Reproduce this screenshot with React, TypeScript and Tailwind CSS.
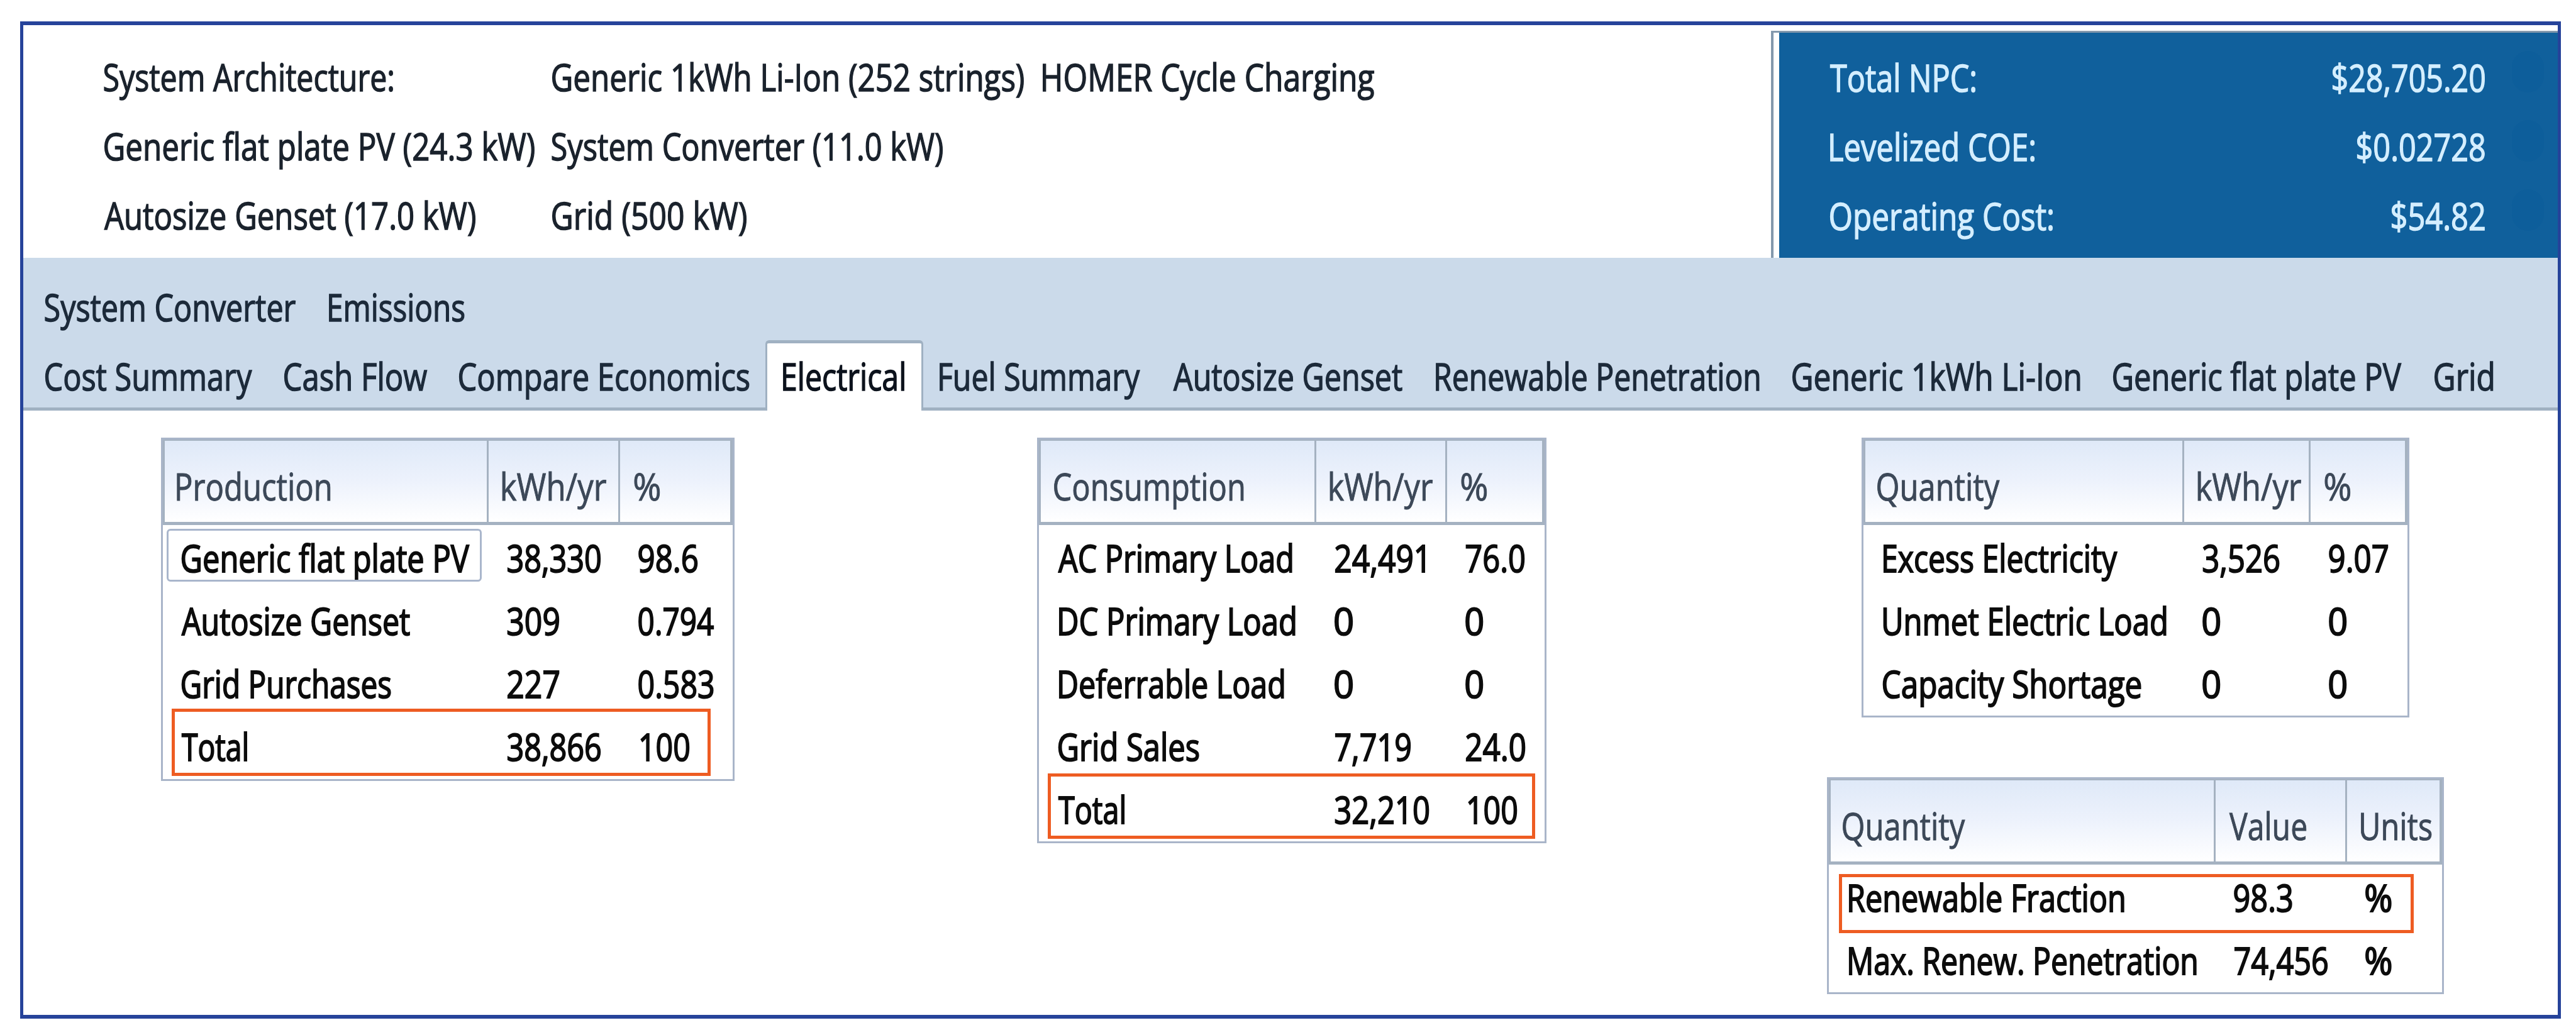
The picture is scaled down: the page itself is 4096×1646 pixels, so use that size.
import React, { useLayoutEffect, useRef, useState } from 'react';

const FONT = "60px 'Open Sans', 'Noto Sans', sans-serif";

// Squeezes a line of text so that its glyphs span exactly the width of its box.
const Fit: React.FC<{ children: string; className: string }> = ({ children, className }) => {
  const ref = useRef<HTMLDivElement>(null);
  const [transform, setTransform] = useState('none');

  useLayoutEffect(() => {
    const ctx = document.createElement('canvas').getContext('2d');
    if (!ref.current || !ctx) return;
    ctx.font = FONT;
    const m = ctx.measureText(children);
    const scale = ref.current.clientWidth / (m.actualBoundingBoxLeft + m.actualBoundingBoxRight);
    setTransform(`translateX(${m.actualBoundingBoxLeft * scale}px) scaleX(${scale})`);
  }, [children]);

  return (
    <div ref={ref} className={`shrink-0 h-[100px] leading-[100px] whitespace-pre ${className}`}>
      <span className="inline-block origin-left" style={{ transform }}>{children}</span>
    </div>
  );
};

type Cell = [text: string, className: string];

interface DataTableProps {
  className: string;
  columns: string;
  header: Cell[];
  rows: Cell[][];
  focused?: number;
  highlighted?: number;
  highlightClass?: string;
}

const DataTable: React.FC<DataTableProps> = ({ className, columns, header, rows, focused, highlighted, highlightClass }) => (
  <div className={`border-[3px] border-[#a9b5c9] ${className}`}>
    <div className={`grid ${columns} h-[136px] border-t-2 border-b-[5px] border-[#a5b2c1] shadow-[inset_3px_0_#a5b2c1,inset_-4px_0_#a5b2c1] bg-linear-to-b from-[#dfe9f8] via-[#edf2fc] to-white text-[#3c4858] [-webkit-text-stroke:1px]`}>
      {header.map(([text, width], i) => (
        <div key={text} className={i === 0 ? 'pl-[22px] pt-[22px]' : 'pl-[22px] pt-[22px] border-l-[3px] border-[#a5b2c1]'}>
          <Fit className={width}>{text}</Fit>
        </div>
      ))}
    </div>
    <div className="pt-[2px] text-[#0c0c0c] [-webkit-text-stroke:2px]">
      {rows.map((row, r) => (
        <div key={r} className={`relative grid ${columns}`}>
          {row.map(([text, width], i) => (
            <div key={i} className={i === 0 ? 'pl-[30px]' : 'pl-[33px]'}>
              <Fit className={width}>{text}</Fit>
            </div>
          ))}
          {focused === r && (
            <div className="absolute left-[6px] top-[4px] w-[501px] h-[84px] border-[3px] border-[#a9b6cc] rounded-md" />
          )}
          {highlighted === r && <div className={`absolute border-[5px] border-[#ee5c22] ${highlightClass}`} />}
        </div>
      ))}
    </div>
  </div>
);

const Tabs: React.FC = () => (
  <div className="h-[240px] bg-[#cbdaea] text-[#1c2a3a]">
    <div className="flex pl-[35px] pt-[28px]">
      <Fit className="w-[398px]">System Converter</Fit>
      <Fit className="w-[215px] ml-[53px]">Emissions</Fit>
    </div>
    <div className="flex h-[112px] mt-[3px] border-b-[5px] border-[#a0b1c2]">
      <div className="flex pt-[7px] pl-[35px] w-[1180px] shrink-0">
        <Fit className="w-[329px]">Cost Summary</Fit>
        <Fit className="w-[227px] ml-[51px]">Cash Flow</Fit>
        <Fit className="w-[461px] ml-[51px]">Compare Economics</Fit>
      </div>
      <div className="w-[251px] h-[112px] shrink-0 bg-white border-t-[5px] border-x-[3px] border-[#a0b1c2] rounded-t-md pl-[25px] pt-[2px] text-[#0c121c]">
        <Fit className="w-[193px]">Electrical</Fit>
      </div>
      <div className="flex pt-[7px] pl-[26px]">
        <Fit className="w-[319px]">Fuel Summary</Fit>
        <Fit className="w-[364px] ml-[53px]">Autosize Genset</Fit>
        <Fit className="w-[514px] ml-[53px]">Renewable Penetration</Fit>
        <Fit className="w-[457px] ml-[53px]">Generic 1kWh Li-Ion</Fit>
        <Fit className="w-[458px] ml-[53px]">Generic flat plate PV</Fit>
        <Fit className="w-[93px] ml-[53px]">Grid</Fit>
      </div>
    </div>
  </div>
);

const costs = [
  { label: 'Total NPC:', labelWidth: 'w-[231px]', value: '$28,705.20', valueWidth: 'w-[242px]' },
  { label: 'Levelized COE:', labelWidth: 'w-[325px]', value: '$0.02728', valueWidth: 'w-[203px]' },
  { label: 'Operating Cost:', labelWidth: 'w-[354px]', value: '$54.82', valueWidth: 'w-[148px]' },
];

const CostPanel: React.FC = () => (
  <div className="w-[1251px] h-[361px] mt-[9px] border-l-[4px] border-t-[3px] border-[#8499ad] pl-[9px] text-[#d4eeff]">
    <div className="h-full bg-[#10609c] pl-[81px] pr-[22px] pt-[21px]">
      {costs.map((cost) => (
        <div key={cost.label} className="flex h-[110px]">
          <Fit className={cost.labelWidth}>{cost.label}</Fit>
          <Fit className={`ml-auto ${cost.valueWidth}`}>{cost.value}</Fit>
          <div className="w-[51px] h-[66px] ml-[43px] mt-[8px] rounded-full bg-[#0d5e9b]" />
        </div>
      ))}
    </div>
  </div>
);

const App: React.FC = () => {
  return (
    <div className="w-[4096px] h-[1646px] bg-white pt-[34px] pl-[32px] overflow-hidden font-['Open_Sans','Noto_Sans',sans-serif] text-[60px] [-webkit-text-stroke:1.5px]">
      <div className="w-[4040px] h-[1586px] border-x-[5px] border-y-[6px] border-[#26439a]">
        <div className="flex justify-between h-[370px]">
          <div className="pl-[129px] pt-[32px] text-[#1a222c]">
            <div className="flex h-[110px]">
              <Fit className="w-[459px]">System Architecture:</Fit>
              <Fit className="w-[750px] ml-[253px]">Generic 1kWh Li-Ion (252 strings)</Fit>
              <Fit className="w-[527px] ml-[30px]">HOMER Cycle Charging</Fit>
            </div>
            <div className="flex h-[110px]">
              <Fit className="w-[684px]">Generic flat plate PV (24.3 kW)</Fit>
              <Fit className="w-[621px] ml-[28px]">System Converter (11.0 kW)</Fit>
            </div>
            <div className="flex h-[110px]">
              <Fit className="w-[590px]">Autosize Genset (17.0 kW)</Fit>
              <Fit className="w-[309px] ml-[122px]">Grid (500 kW)</Fit>
            </div>
          </div>
          <CostPanel />
        </div>
        <Tabs />
        <div className="flex items-start pt-[46px] pl-[219px]">
          <DataTable
            className="w-[912px] h-[546px]"
            columns="grid-cols-[515px_209px_1fr]"
            header={[['Production', 'w-[244px]'], ['kWh/yr', 'w-[165px]'], ['%', 'w-[41px]']]}
            rows={[
              [['Generic flat plate PV', 'w-[457px]'], ['38,330', 'w-[148px]'], ['98.6', 'w-[93px]']],
              [['Autosize Genset', 'w-[363px]'], ['309', 'w-[82px]'], ['0.794', 'w-[119px]']],
              [['Grid Purchases', 'w-[332px]'], ['227', 'w-[82px]'], ['0.583', 'w-[118px]']],
              [['Total', 'w-[104px]'], ['38,866', 'w-[148px]'], ['100', 'w-[77px] ml-[3px]']],
            ]}
            focused={0}
            highlighted={3}
            highlightClass="left-[14px] top-[-10px] w-[857px] h-[107px]"
          />
          <DataTable
            className="w-[810px] h-[645px] ml-[481px]"
            columns="grid-cols-[438px_208px_1fr]"
            header={[['Consumption', 'w-[301px] ml-[2px]'], ['kWh/yr', 'w-[163px]'], ['%', 'w-[41px]']]}
            rows={[
              [['AC Primary Load', 'w-[371px] ml-[1px]'], ['24,491', 'w-[143px]'], ['76.0', 'w-[93px]']],
              [['DC Primary Load', 'w-[375px] ml-[2px]'], ['0', 'w-[28px]'], ['0', 'w-[27px]']],
              [['Deferrable Load', 'w-[357px] ml-[2px]'], ['0', 'w-[28px]'], ['0', 'w-[27px]']],
              [['Grid Sales', 'w-[223px] ml-[1px]'], ['7,719', 'w-[120px]'], ['24.0', 'w-[94px]']],
              [['Total', 'w-[105px] ml-[1px]'], ['32,210', 'w-[149px]'], ['100', 'w-[77px] ml-[4px]']],
            ]}
            highlighted={4}
            highlightClass="left-[14px] top-[-7px] w-[775px] h-[104px]"
          />
          <div className="flex flex-col ml-[446px]">
            <DataTable
              className="w-[871px] h-[445px] ml-[55px]"
              columns="grid-cols-[507px_201px_1fr]"
              header={[['Quantity', 'w-[195px]'], ['kWh/yr', 'w-[164px]'], ['%', 'w-[41px]']]}
              rows={[
                [['Excess Electricity', 'w-[372px] ml-[2px]'], ['3,526', 'w-[121px]'], ['9.07', 'w-[93px]']],
                [['Unmet Electric Load', 'w-[449px] ml-[2px]'], ['0', 'w-[27px]'], ['0', 'w-[27px]']],
                [['Capacity Shortage', 'w-[410px] ml-[1px]'], ['0', 'w-[27px]'], ['0', 'w-[27px]']],
              ]}
            />
            <DataTable
              className="w-[981px] h-[345px] mt-[95px]"
              columns="grid-cols-[612px_209px_1fr]"
              header={[['Quantity', 'w-[195px]'], ['Value', 'w-[122px]'], ['Units', 'w-[112px]']]}
              rows={[
                [['Renewable Fraction', 'w-[437px] ml-[2px]'], ['98.3', 'w-[91px]'], ['%', 'w-[41px] -ml-px']],
                [['Max. Renew. Penetration', 'w-[552px] ml-[2px]'], ['74,456', 'w-[148px]'], ['%', 'w-[41px] -ml-px']],
              ]}
              highlighted={0}
              highlightClass="left-[16px] top-[13px] w-[914px] h-[94px]"
            />
          </div>
        </div>
      </div>
    </div>
  );
};

export default App;
